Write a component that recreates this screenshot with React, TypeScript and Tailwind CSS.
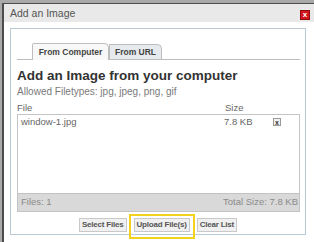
import { FC } from "react";

const font = { fontFamily: '"Liberation Sans", Arial, sans-serif' };

const Btn: FC<{ label: string }> = ({ label }) => (
  <button className="h-[14px] px-[2px] border border-[#c9c9c9] bg-[#f0f0f0] text-[8px] tracking-[-0.2px] font-bold text-[#555] leading-none">
    {label}
  </button>
);

export default function App() {
  return (
    <div className="w-[314px] h-[242px] overflow-hidden bg-[#a9a9a9] pl-[2px] pt-[3px]" style={font}>
      <div className="w-[320px] h-[260px] border-l-2 border-t border-[#4d4d4d] bg-white">
        {/* title bar */}
        <div className="w-[310px] h-[18px] bg-[#e9e9e9] flex items-center justify-between pl-[6px] pr-[4px]">
          <span className="text-[10.5px] text-[#555] pt-[2px]">Add an Image</span>
          <span className="w-[10px] h-[10px] mt-[3px] bg-[#d3141c] border border-[#8f0c10] text-white text-[8px] font-bold leading-none flex items-center justify-center">
            x
          </span>
        </div>

        <div className="pl-[6px] pt-[6px]">
          <div className="w-[296px] h-[207px] border border-[#b8cad6] pl-[6px] pr-[5px] pt-[14px]">
            {/* tabs */}
            <div className="flex items-end pl-[15px] h-[17px] border-b border-[#bdbdbd]">
              <div className="h-[17px] w-[77px] bg-[#f8f8f8] border border-b-0 border-[#bdbdbd] rounded-tl-[2px] rounded-tr-[5px] text-[8.5px] font-bold text-[#444] flex items-center justify-center -mb-px">
                From Computer
              </div>
              <div className="h-[15px] w-[53px] bg-[#e6e9ed] border border-b-0 border-[#bdbdbd] rounded-tr-[5px] text-[8.5px] font-bold text-[#444] flex items-center justify-center">
                From URL
              </div>
            </div>

            <div className="pt-[8px] text-[13.5px] font-bold text-[#333] leading-[15px]">Add an Image from your computer</div>
            <div className="pt-[3px] text-[10px] text-[#7a7a7a] leading-[12px]">Allowed Filetypes: jpg, jpeg, png, gif</div>

            <div className="flex text-[9.5px] text-[#666] leading-[11px] pt-[4px]">
              <span className="flex-1">File</span>
              <span className="w-[75px]">Size</span>
            </div>

            {/* file list */}
            <div className="mt-[1px] border border-[#c4c4c4] h-[98px] flex flex-col">
              <div className="flex-1">
                <div className="flex items-center h-[14px] pl-[3px] text-[9.5px] text-[#666]">
                  <span className="flex-1">window-1.jpg</span>
                  <span className="w-[49px]">7.8 KB</span>
                  <span className="w-[8px] h-[8px] border border-[#9a9a9a] bg-[#f2f2f2] text-[7px] font-bold text-[#333] leading-none flex items-center justify-center mr-[18px]">
                    x
                  </span>
                </div>
              </div>
              <div className="h-[18px] bg-[#d9d9d9] border-t border-[#c2c2c2] flex items-center justify-between pl-[3px] pr-[1px] text-[9.5px] text-[#8a8a8a]">
                <span>Files: 1</span>
                <span>Total Size: 7.8 KB</span>
              </div>
            </div>

            {/* buttons */}
            <div className="flex justify-center items-start pt-[6px] -ml-[6px] -mr-[5px]">
              <Btn label="Select Files" />
              <div className="relative flex mx-[7px]">
                <Btn label="Upload File(s)" />
                <span className="absolute -left-[5px] -right-[5px] -top-[4px] -bottom-[7px] border-2 border-[#f3d21f] pointer-events-none" />
              </div>
              <Btn label="Clear List" />
            </div>
          </div>
        </div>
      </div>
    </div>
  );
}
